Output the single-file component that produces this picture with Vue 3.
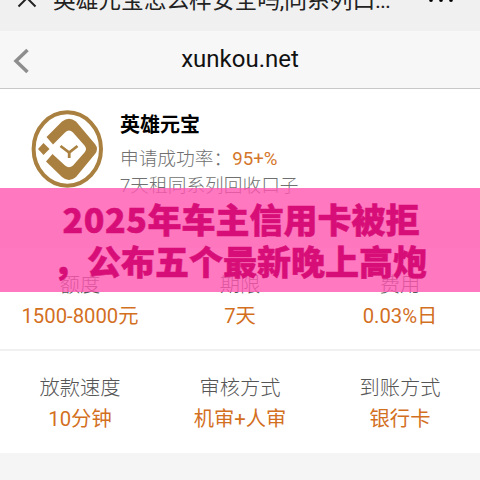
<script setup>
const rows = [
  [
    { label: '额度', value: '1500-8000元' },
    { label: '期限', value: '7天' },
    { label: '费用', value: '0.03%日' },
  ],
  [
    { label: '放款速度', value: '10分钟' },
    { label: '审核方式', value: '机审+人审' },
    { label: '到账方式', value: '银行卡' },
  ],
]
</script>

<template>
  <div class="page">
    <header class="titlebar">
      <svg class="close" width="20" height="20" viewBox="0 0 20 20"><path d="M1.5 1.5 18.5 18.5M18.5 1.5 1.5 18.5" /></svg>
      <span class="title">英雄元宝怎么样安全吗,同系列口<span class="dots">...</span></span>
      <svg class="more" width="26" height="4" viewBox="0 0 26 4"><circle cx="2" cy="2" r="1.9" /><circle cx="12" cy="2" r="1.9" /><circle cx="22" cy="2" r="1.9" /></svg>
    </header>
    <nav class="navbar">
      <svg class="back" width="18" height="26" viewBox="0 0 18 26"><path d="M14.5 2 3 13 14.5 24" /></svg>
      <span class="site">xunkou.net</span>
    </nav>
    <section class="product">
      <svg class="logo" width="73" height="79" viewBox="0 0 73 79">
        <ellipse cx="36.300" cy="39" rx="33.700" ry="36.700" fill="none" stroke="#a9803f" stroke-width="4" />
        <path fill="#a9803f" d="M15.500 27 31 11.500Q38 6 45 11.500L64 34Q68 39 64 44L45 67Q38 73 31 67L15 51.500 21.500 44 34 55.500Q38 59 42 55.500L53.500 42.500Q56.500 39 53.500 35.500L42 22.500Q38 18.500 34 22.500L22 34.500Z" />
        <path fill="#a9803f" d="M12.500 33 18.500 39 12.500 45 7 39Z" />
        <path d="M29.500 36 38.200 42.500 46.500 36M38.200 42V48" fill="none" stroke="#a9803f" stroke-width="2.800" />
      </svg>
      <div class="info">
        <h1>英雄元宝</h1>
        <p>申请成功率：<b>95+%</b></p>
        <p>7天租同系列回收口子</p>
      </div>
    </section>
    <section class="details">
      <div v-for="(row, i) in rows" :key="i" class="row">
        <div v-for="cell in row" :key="cell.label" class="cell">
          <span class="label">{{ cell.label }}</span>
          <span class="value">{{ cell.value }}</span>
        </div>
      </div>
    </section>
    <div class="banner">
      <div class="first"><span class="year">2025</span>年车主信用卡被拒</div>
      <div>，公布五个最新晚上高炮</div>
    </div>
  </div>
</template>

<style>
body { background: #f5f5f5; }
</style>

<style scoped>
.page {
  position: relative;
  width: 480px;
  height: 480px;
  overflow: hidden;
  background: #f5f5f5;
  font-family: Roboto, "Noto Sans CJK SC", sans-serif;
}
.titlebar {
  display: flex;
  align-items: flex-start;
  height: 31px;
  background: #f0f0f0;
  color: #222;
}
.close { margin: -12px 0 0 17px; flex: none; }
.close path { stroke: #222; stroke-width: 2; }
.title {
  width: 374px;
  margin: -15px 0 0 16px;
  font-size: 22.700px;
  line-height: 32px;
  white-space: nowrap;
}
.dots { letter-spacing: -1px; }
.more { margin: -2px 0 0 2px; flex: none; }
.navbar {
  display: flex;
  align-items: center;
  height: 57px;
  background: #f7f7f7;
  border-bottom: 1px solid #c8c8c8;
}
.back { margin: 2px 0 0 13px; }
.back path { fill: none; stroke: #8e8e8e; stroke-width: 3.5; }
.site {
  flex: 1;
  padding-right: 31px;
  margin-top: -2px;
  text-align: center;
  font-size: 24px;
  line-height: 30px;
  color: #111;
}
.product {
  display: flex;
  height: 131px;
  background: #fff;
}
.logo { margin: 21px 0 0 31px; flex: none; }
.info { padding: 21px 0 0 16px; }
h1 {
  margin: 0 0 6px;
  font-size: 20px;
  line-height: 30px;
  font-weight: 700;
  color: #000;
}
p {
  margin: 0;
  font-size: 18.700px;
  line-height: 27px;
  font-weight: 300;
  color: #707070;
}
p b { font-weight: 400; color: #d4772c; }
.details { margin-top: 28px; background: #fff; }
.row {
  display: grid;
  grid-template-columns: repeat(3, 160px);
  height: 79px;
  padding-top: 22px;
}
.row + .row {
  height: 80px;
  border-top: 2px solid #f1f1f1;
}
.cell {
  display: flex;
  flex-direction: column;
  align-items: center;
  font-size: 20.300px;
  line-height: 31px;
  font-weight: 300;
  white-space: nowrap;
}
.label { color: #555; }
.value { color: #d3701f; font-weight: 400; }
.banner {
  position: absolute;
  top: 188px;
  left: 0;
  width: 480px;
  height: 104px;
  padding-top: 10px;
  box-sizing: border-box;
  background: rgba(255, 86, 176, 0.8);
  color: #d80e78;
  font: 900 34px/42px "Noto Sans CJK SC", sans-serif;
  text-align: center;
  white-space: nowrap;
  -webkit-text-stroke: 0.5px #d80e78;
}
.first { padding-left: 2px; }
.year { letter-spacing: 0.500px; }
</style>
